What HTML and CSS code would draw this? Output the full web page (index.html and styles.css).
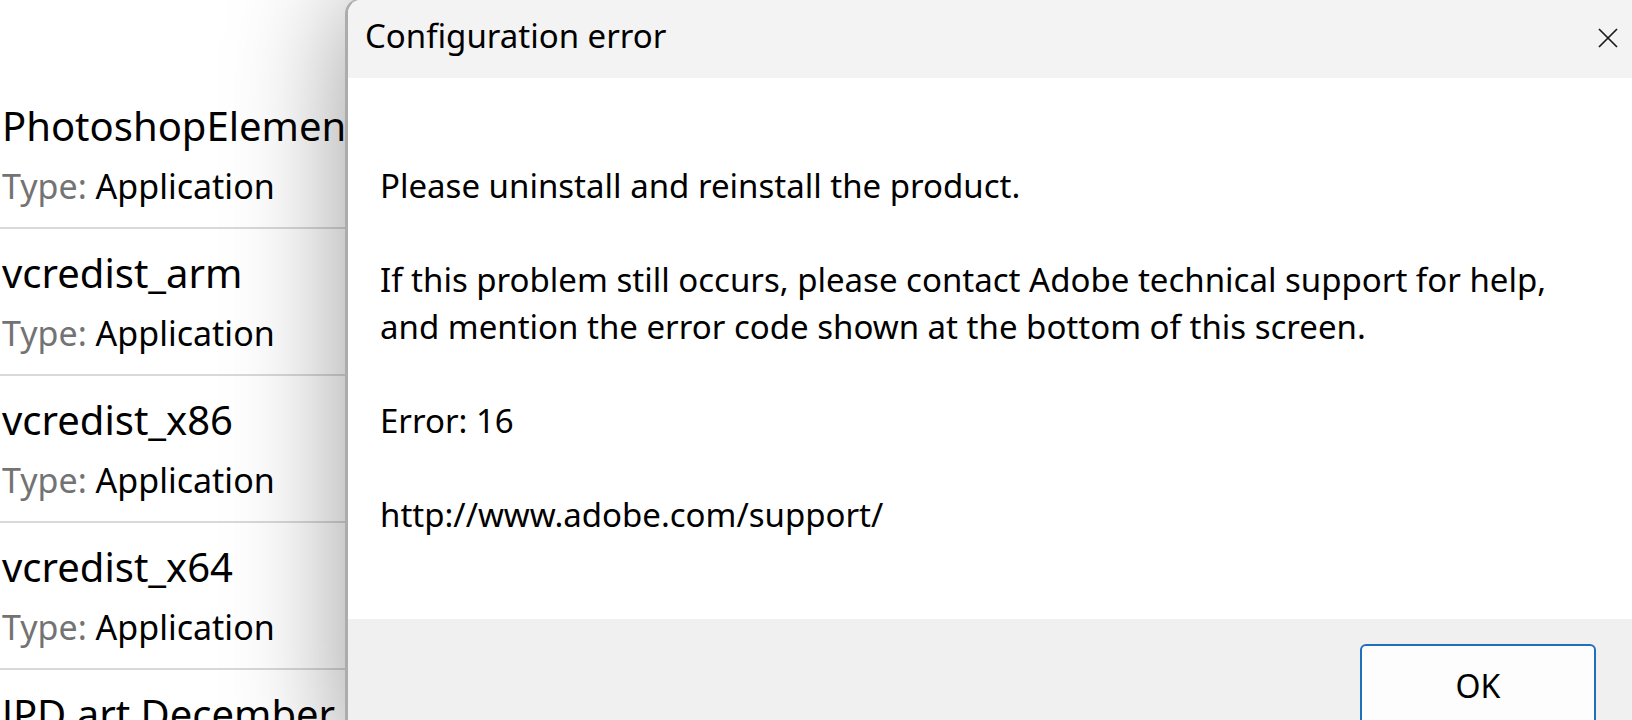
FILE: index.html
```html
<!DOCTYPE html>
<html lang="en">
<head>
<meta charset="utf-8">
<title>Configuration error</title>
<link rel="stylesheet" href="styles.css">
</head>
<body>
<div class="screen">
  <ul class="app-list">
    <li class="app-item">
      <div class="app-name">PhotoshopElements</div>
      <div class="app-type"><span class="label">Type:</span> Application</div>
    </li>
    <li class="app-item">
      <div class="app-name">vcredist_arm</div>
      <div class="app-type"><span class="label">Type:</span> Application</div>
    </li>
    <li class="app-item">
      <div class="app-name">vcredist_x86</div>
      <div class="app-type"><span class="label">Type:</span> Application</div>
    </li>
    <li class="app-item">
      <div class="app-name">vcredist_x64</div>
      <div class="app-type"><span class="label">Type:</span> Application</div>
    </li>
    <li class="app-item">
      <div class="app-name">JPD art December</div>
      <div class="app-type"><span class="label">Type:</span> Application</div>
    </li>
  </ul>

  <div class="dialog">
    <div class="titlebar">
      <div class="title">Configuration error</div>
      <div class="close">
        <svg width="20" height="20" viewBox="0 0 20 20"><path d="M1 1 L19 19 M19 1 L1 19" stroke="#1a1a1a" stroke-width="1.7" fill="none"/></svg>
      </div>
    </div>
    <div class="content">
      <p>Please uninstall and reinstall the product.</p>
      <p>If this problem still occurs, please contact Adobe technical support for help,<br>and mention the error code shown at the bottom of this screen.</p>
      <p>Error: 16</p>
      <p>http://www.adobe.com/support/</p>
    </div>
    <div class="footer">
      <button class="ok">OK</button>
    </div>
  </div>
</div>
</body>
</html>
```
FILE: styles.css
```css
html, body {
  margin: 0;
  padding: 0;
  background: #ffffff;
  overflow: hidden;
}
.screen {
  position: relative;
  width: 1632px;
  height: 720px;
  overflow: hidden;
  font-family: "Noto Sans", "Open Sans", sans-serif;
  color: #000;
}
.app-list {
  list-style: none;
  margin: 0;
  padding: 82px 0 0 0;
}
.app-item {
  padding: 15px 0 10px 2px;
  border-bottom: 2px solid #d9d9d9;
  white-space: nowrap;
}
.app-name {
  font-size: 40px;
  line-height: 58px;
}
.app-type {
  font-size: 34px;
  line-height: 62px;
}
.label {
  color: #737373;
}
.dialog {
  position: absolute;
  left: 345px;
  top: -2px;
  width: 1284px;
  height: 770px;
  border-left: 3px solid #acacac;
  border-top: 2px solid #b8b8b8;
  border-top-left-radius: 16px;
  background: #fff;
  box-shadow: 0 0 115px rgba(0, 0, 0, 0.4);
  display: flex;
  flex-direction: column;
  overflow: hidden;
}
.titlebar {
  height: 72px;
  padding: 0 14px 6px 17px;
  background: #f3f3f3;
  display: flex;
  align-items: center;
  justify-content: space-between;
  flex: none;
}
.title {
  font-size: 33px;
  line-height: 72px;
}
.close {
  width: 20px;
  height: 20px;
  display: flex;
  margin-top: 4px;
}
.content {
  height: 457px;
  padding: 84px 0 0 32px;
  font-size: 33px;
  line-height: 47px;
  flex: none;
}
.content p {
  margin: 0 0 47px 0;
  white-space: nowrap;
}
.footer {
  flex: 1;
  background: #f0f0f0;
  padding: 25px 36px 0 0;
  display: flex;
  justify-content: flex-end;
  align-items: flex-start;
}
.ok {
  width: 236px;
  height: 84px;
  border: 2px solid #1f6fbd;
  border-radius: 6px;
  background: #fdfdfd;
  font-family: "Noto Sans", "Open Sans", sans-serif;
  font-size: 32px;
  line-height: 80px;
  color: #000;
  padding: 0;
  display: block;
}
```
